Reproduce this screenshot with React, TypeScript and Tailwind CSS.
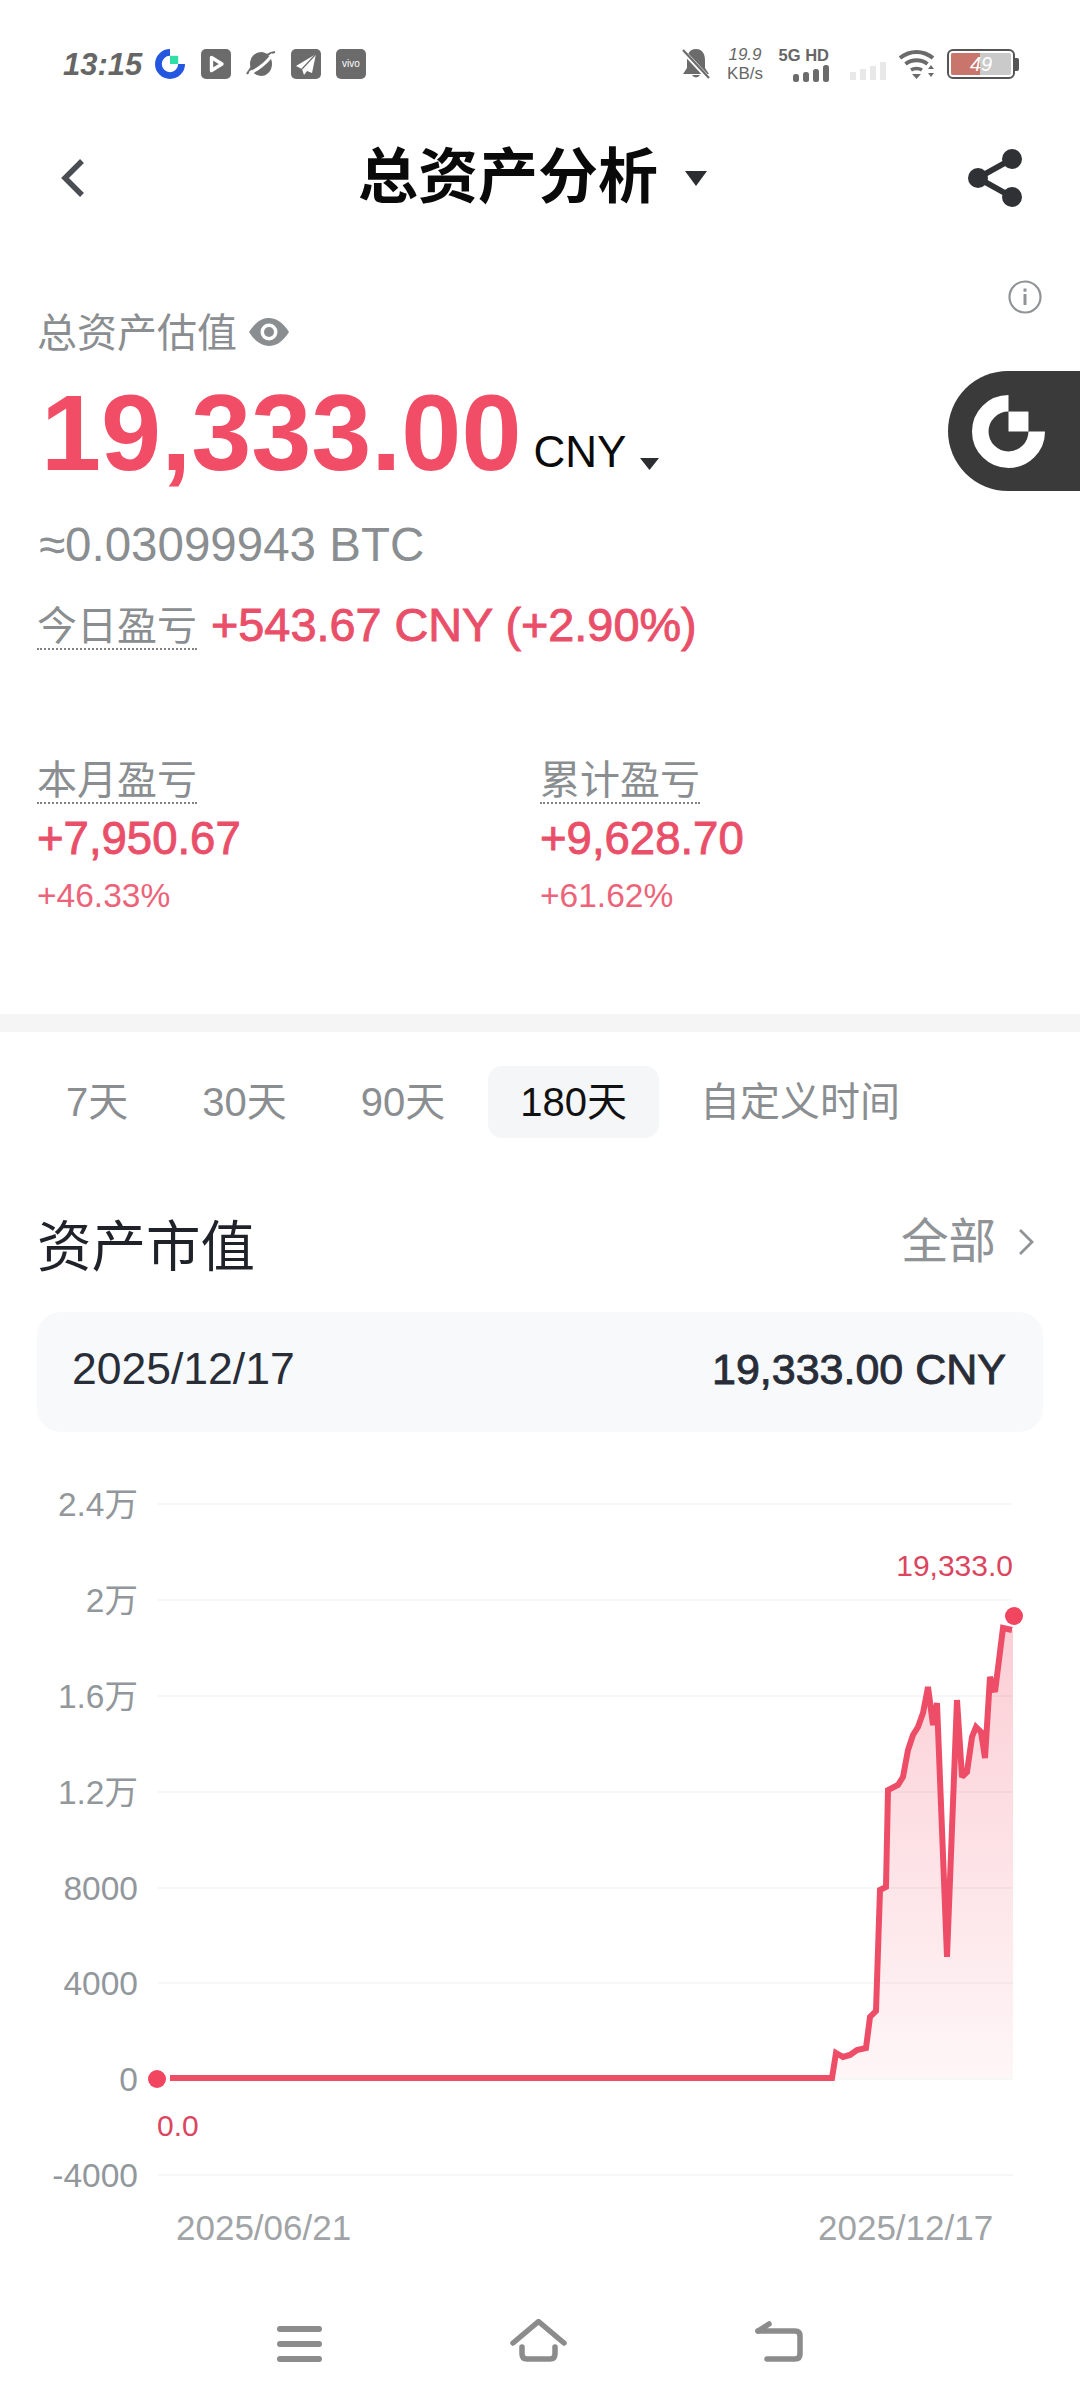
const sans = "font-['Liberation_Sans','Noto_Sans_CJK_SC',sans-serif]";

const linePts: [number, number][] = [
  [170, 2078], [832, 2078], [836, 2053], [843, 2057], [850, 2055], [857, 2050], [866, 2048], [870, 2017], [876, 2011],
  [880, 1890], [886, 1887], [888, 1790], [898, 1785], [903, 1777], [908, 1750], [913, 1735], [918, 1727], [923, 1713],
  [928, 1687], [933, 1725], [937, 1703], [947, 1957], [957, 1700], [962, 1777], [967, 1772], [972, 1737], [976, 1727],
  [981, 1732], [985, 1758], [990, 1677], [995, 1692], [1003, 1628], [1012, 1630],
];
const polyline = linePts.map((p) => p.join(",")).join(" ");
const area = [...linePts.slice(1), [1013, 1630], [1013, 2078]].map((p) => p.join(",")).join(" ");

const yLabels: [string, number][] = [
  ["2.4万", 1504], ["2万", 1600], ["1.6万", 1696], ["1.2万", 1792], ["8000", 1888], ["4000", 1983], ["0", 2079], ["-4000", 2175],
];

function GateLogo({ size, color, square }: { size: number; color: string; square: string }) {
  return (
    <svg width={size} height={size} viewBox="0 0 30 30">
      <path d="M15 3.4 A11.6 11.6 0 1 0 26.6 15" fill="none" stroke={color} strokeWidth="6.8" />
      <rect x="15" y="6.8" width="8.2" height="8.2" fill={square} />
    </svg>
  );
}

function StatusBar() {
  return (
    <div className="flex h-[128px] items-center pl-[63px] text-[#666]">
      <span className="w-[92px] text-[31px] font-bold italic leading-none">13:15</span>
      <GateLogo size={30} color="#2357e0" square="#2ee0a8" />
      <svg className="ml-[16px]" width="30" height="30" viewBox="0 0 30 30">
        <rect width="30" height="30" rx="5" fill="#6b6b6b" />
        <path d="M10.5 8.5 L21 15 L10.5 21.5 Z" fill="none" stroke="#fff" strokeWidth="3.4" strokeLinejoin="round" />
      </svg>
      <svg className="ml-[15px]" width="30" height="30" viewBox="0 0 30 30">
        <ellipse cx="15" cy="15" rx="11" ry="12" fill="#6b6b6b" />
        <path d="M1 25 C6 16 18 5 29 3" fill="none" stroke="#6b6b6b" strokeWidth="2.2" />
        <path d="M3.5 24 C10 22 22 13 26.5 5" fill="none" stroke="#fff" strokeWidth="3" />
      </svg>
      <svg className="ml-[15px]" width="30" height="30" viewBox="0 0 30 30">
        <rect width="30" height="30" rx="5" fill="#6b6b6b" />
        <path d="M25 5 L5 17 L11 20 L13 26 L16 22 L21 24 Z" fill="#fff" />
        <path d="M25 5 L11 20" stroke="#6b6b6b" strokeWidth="1.2" />
      </svg>
      <div className="ml-[15px] flex h-[30px] w-[30px] items-center justify-center rounded-[5px] bg-[#6b6b6b] text-[10px] leading-none text-white">vivo</div>
      <svg className="ml-[316px]" width="28" height="32" viewBox="0 0 28 32">
        <path d="M14 1 C7 1 5 7 5 12 V20 L1 26 H27 L23 20 V12 C23 7 21 1 14 1 Z" fill="#6b6b6b" />
        <path d="M10 27 A4.5 4.5 0 0 0 18 27 Z" fill="#6b6b6b" />
        <path d="M0 2 L27 31" stroke="#fff" strokeWidth="4.5" />
        <path d="M1 2 L27 30" stroke="#6b6b6b" strokeWidth="2.2" />
      </svg>
      <div className="ml-[15px] flex w-[40px] flex-col items-center text-[17px] leading-[19px]">
        <span className="italic">19.9</span>
        <span>KB/s</span>
      </div>
      <div className="ml-[14px] flex w-[50px] flex-col items-end">
        <span className="whitespace-nowrap text-[16.5px] font-bold leading-[17px]">5G HD</span>
        <svg width="36" height="17" viewBox="0 0 36 17" className="mt-[1px]">
          <rect x="0" y="9" width="6" height="8" rx="2.5" fill="#6b6b6b" />
          <rect x="10" y="7" width="6" height="10" rx="2.5" fill="#6b6b6b" />
          <rect x="20" y="4" width="6" height="13" rx="2.5" fill="#6b6b6b" />
          <rect x="30" y="0" width="6" height="17" rx="2.5" fill="#6b6b6b" />
        </svg>
      </div>
      <svg className="ml-[21px] mt-[14px]" width="36" height="18" viewBox="0 0 36 18">
        <rect x="0" y="10" width="6" height="8" fill="#e8e8e8" />
        <rect x="10" y="7" width="6" height="11" fill="#e8e8e8" />
        <rect x="20" y="4" width="6" height="14" fill="#e8e8e8" />
        <rect x="30" y="0" width="6" height="18" fill="#e8e8e8" />
      </svg>
      <svg className="ml-[12px]" width="37" height="30" viewBox="0 0 37 30">
        <path d="M2 9 C12 1 25 1 35 9" fill="none" stroke="#6b6b6b" strokeWidth="4" />
        <path d="M7.5 15 C14 10 23 10 29.5 15" fill="none" stroke="#6b6b6b" strokeWidth="4" />
        <path d="M13 21 C16 19 21 19 24 21" fill="none" stroke="#6b6b6b" strokeWidth="3.5" />
        <path d="M14 25 H23 L18.5 30 Z" fill="#6b6b6b" />
        <path d="M30 20 L33 16 L36 20 Z M30 24 H36 L33 28 Z" fill="#6b6b6b" />
      </svg>
      <div className="ml-[12px] flex items-center">
        <div className="flex h-[30px] w-[68px] rounded-[6px] border-2 border-[#555] p-[2px]">
          <div className="relative flex h-full w-full overflow-hidden rounded-[2px] bg-[#cacaca]">
            <div className="h-full w-[29px] bg-[#c9756b]" />
            <span className="absolute left-[19px] top-0 text-[20px] italic leading-[22px] text-white">49</span>
          </div>
        </div>
        <div className="h-[13px] w-[4px] rounded-r-[2px] bg-[#555]" />
      </div>
    </div>
  );
}

function Header() {
  return (
    <div className="flex h-[100px] items-center">
      <svg className="ml-[60px]" width="26" height="40" viewBox="0 0 26 40">
        <path d="M22 3 L5 20 L22 37" fill="none" stroke="#4a4d52" strokeWidth="5.5" />
      </svg>
      <span className="ml-[272px] text-[60px] font-bold leading-none text-[#0a0a0a]">总资产分析</span>
      <svg className="ml-[26px]" width="24" height="15" viewBox="0 0 24 15">
        <path d="M1 0 H23 L12 15 Z" fill="#2b2d30" />
      </svg>
      <svg className="ml-[259px]" width="56" height="58" viewBox="0 0 56 58">
        <path d="M45 10 L11 29 L45 48" fill="none" stroke="#2f3134" strokeWidth="6" />
        <circle cx="45" cy="10" r="10" fill="#2f3134" />
        <circle cx="11" cy="29" r="10" fill="#2f3134" />
        <circle cx="45" cy="48" r="10" fill="#2f3134" />
      </svg>
    </div>
  );
}

function Summary() {
  return (
    <div className="px-[37px]">
      <div className="mt-[52px] flex h-[32px] justify-end">
        <svg className="mr-[1px]" width="34" height="34" viewBox="0 0 34 34">
          <circle cx="17" cy="17" r="15.5" fill="none" stroke="#8f9396" strokeWidth="2.2" />
          <rect x="15.5" y="14" width="3" height="11" fill="#8f9396" />
          <rect x="15.5" y="8.5" width="3" height="3.2" fill="#8f9396" />
        </svg>
      </div>
      <div className="mt-[1px] flex h-[40px] items-center">
        <span className="text-[40px] leading-[40px] text-[#8a8e91]">总资产估值</span>
        <svg className="mb-[3px] ml-[11px]" width="42" height="28" viewBox="0 0 42 28">
          <path d="M1 14 C8 3 15 0 21 0 C27 0 34 3 41 14 C34 25 27 28 21 28 C15 28 8 25 1 14 Z" fill="#8a8e91" />
          <circle cx="21" cy="14" r="8.5" fill="#fff" />
          <circle cx="21" cy="14" r="5" fill="#8a8e91" />
        </svg>
      </div>
      <div className="mt-[27px] flex h-[106px] items-baseline">
        <span className="ml-[4px] text-[108px] font-bold leading-[106px] text-[#f24d66]">19,333.00</span>
        <span className="ml-[12px] -translate-y-[3px] text-[44px] leading-none text-[#0a0a0a]">CNY</span>
        <svg className="mb-[12px] ml-[14px]" width="19" height="12" viewBox="0 0 19 12">
          <path d="M0 0 H19 L9.5 12 Z" fill="#2b2d30" />
        </svg>
      </div>
      <div className="ml-[2px] mt-[31px] h-[56px] text-[47.5px] leading-[56px] text-[#8a8e91]">≈0.03099943 BTC</div>
      <div className="mt-[24px] flex h-[56px] items-start">
        <span className="mt-[7px] border-b-2 border-dotted border-[#7f8386] text-[40px] leading-[44px] text-[#8a8e91]">今日盈亏</span>
        <span className="ml-[14px] text-[46.8px] leading-[56px] text-[#ea4f69] [-webkit-text-stroke:0.9px_#ea4f69]">+543.67 CNY (+2.90%)</span>
      </div>
      <div className="mt-[105px] grid grid-cols-[503px_1fr]">
        <Stat label="本月盈亏" value="+7,950.67" pct="+46.33%" />
        <Stat label="累计盈亏" value="+9,628.70" pct="+61.62%" />
      </div>
    </div>
  );
}

function Stat({ label, value, pct }: { label: string; value: string; pct: string }) {
  return (
    <div className="flex flex-col items-start">
      <span className="border-b-2 border-dotted border-[#7f8386] text-[40px] leading-[44px] text-[#8a8e91]">{label}</span>
      <span className="mt-[10px] text-[45.5px] leading-[50px] text-[#ea4f69] [-webkit-text-stroke:0.9px_#ea4f69]">{value}</span>
      <span className="mt-[12px] text-[33.5px] leading-[40px] text-[#ec6479]">{pct}</span>
    </div>
  );
}

function Tabs() {
  return (
    <div className="mt-[34px] flex h-[72px] gap-2 pl-[33px] text-[40px] text-[#8a8e91]">
      <div className="flex items-center px-[33px]">7天</div>
      <div className="flex items-center px-[33px]">30天</div>
      <div className="flex items-center px-[33px]">90天</div>
      <div className="ml-[2px] flex items-center rounded-[14px] bg-[#f5f6f7] px-[32px] text-[#111]">180天</div>
      <div className="flex items-center px-[33px]">自定义时间</div>
    </div>
  );
}

function Chart() {
  return (
    <svg className="mt-[8px] block" width="1080" height="820" viewBox="0 1440 1080 820">
      <defs>
        <linearGradient id="fill" gradientUnits="userSpaceOnUse" x1="0" y1="1628" x2="0" y2="2078">
          <stop offset="0" stopColor="#f04a63" stopOpacity="0.27" />
          <stop offset="1" stopColor="#f04a63" stopOpacity="0.05" />
        </linearGradient>
      </defs>
      {yLabels.map(([t, y]) => (
        <g key={t}>
          <line x1="158" x2="1013" y1={y} y2={y} stroke="#f3f4f5" strokeWidth="1.5" />
          <text x="138" y={y + 12} textAnchor="end" fontSize="33.5" fill="#92979b">{t}</text>
        </g>
      ))}
      <polygon points={area} fill="url(#fill)" />
      <polyline points={polyline} fill="none" stroke="#ee4d67" strokeWidth="6" strokeLinejoin="miter" strokeMiterlimit="2" />
      <circle cx="157" cy="2079" r="9" fill="#f24560" />
      <circle cx="1014" cy="1616" r="9" fill="#f24560" />
      <text x="1013" y="1576" textAnchor="end" fontSize="30" fill="#dc4560">19,333.0</text>
      <text x="157" y="2136" fontSize="30" fill="#dc4560">0.0</text>
      <text x="176" y="2240" fontSize="35" fill="#a0a4a6">2025/06/21</text>
      <text x="818" y="2240" fontSize="35" fill="#a0a4a6">2025/12/17</text>
    </svg>
  );
}

function NavBar() {
  return (
    <div className="flex flex-1 items-start justify-center gap-[188px] pt-[59px]">
      <svg className="mt-[7px]" width="45" height="36" viewBox="0 0 45 36">
        <path d="M3 3 H42 M3 18 H42 M3 33 H42" stroke="#8c8c8c" strokeWidth="6" strokeLinecap="round" />
      </svg>
      <svg width="57" height="43" viewBox="0 0 57 43">
        <path d="M3 24 L28.5 2.5 L54 24" fill="none" stroke="#8c8c8c" strokeWidth="5.5" strokeLinecap="round" strokeLinejoin="round" />
        <path d="M12 28 V35 Q12 40 17 40 H40 Q45 40 45 35 V28" fill="none" stroke="#8c8c8c" strokeWidth="5.5" strokeLinecap="round" />
      </svg>
      <svg className="mt-[2px]" width="48" height="41" viewBox="0 0 48 41">
        <path d="M3 10 H40 Q45 10 45 15 V33 Q45 38 40 38 H12" fill="none" stroke="#8c8c8c" strokeWidth="5.5" strokeLinecap="round" />
        <path d="M3 10 L14 3" fill="none" stroke="#8c8c8c" strokeWidth="5.5" strokeLinecap="round" />
      </svg>
    </div>
  );
}

export default function App() {
  return (
    <div className={`relative flex h-[2408px] w-[1080px] flex-col overflow-hidden bg-white ${sans}`}>
      <StatusBar />
      <Header />
      <Summary />
      <div className="mt-[98px] h-[18px] bg-[#f5f5f6]" />
      <Tabs />
      <div className="mt-[78px] flex h-[60px] items-center justify-between pl-[37px] pr-[46px]">
        <span className="mt-[4px] text-[54.5px] leading-[60px] text-[#1f2329]">资产市值</span>
        <div className="mb-[8px] flex items-center text-[#8f9396]">
          <span className="text-[47.5px] leading-[60px]">全部</span>
          <svg className="ml-[22px]" width="16" height="28" viewBox="0 0 16 28">
            <path d="M2 2 L14 14 L2 26" fill="none" stroke="#8f9396" strokeWidth="2.8" />
          </svg>
        </div>
      </div>
      <div className="mx-[37px] mt-[36px] flex h-[120px] items-center justify-between rounded-[24px] bg-[#f8f9fb] pb-[5px] pl-[35px] pr-[37px] text-[#282d38]">
        <span className="text-[44.5px]">2025/12/17</span>
        <span className="text-[43px] [-webkit-text-stroke:0.9px_#282d38]">19,333.00 CNY</span>
      </div>
      <Chart />
      <NavBar />
      <div className="absolute left-[948px] top-[371px] flex h-[120px] w-[132px] items-center rounded-l-[60px] bg-[#3a3a3a] pl-[24px]">
        <GateLogo size={73} color="#fff" square="#fff" />
      </div>
    </div>
  );
}
